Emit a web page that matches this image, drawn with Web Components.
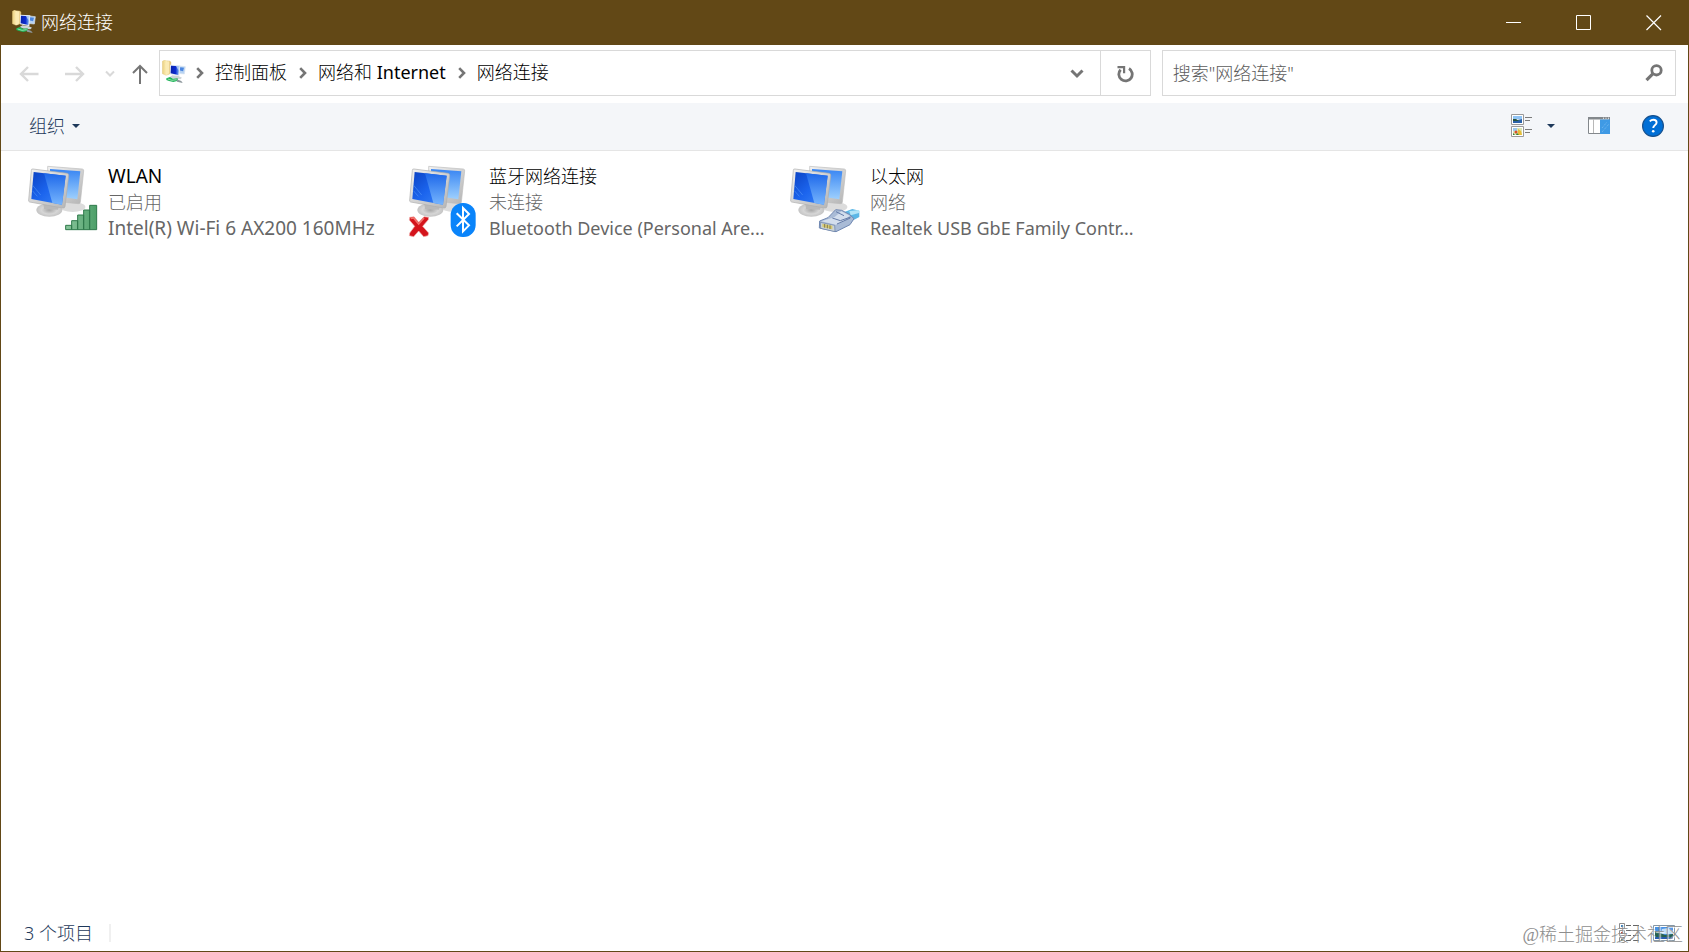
<!DOCTYPE html>
<html lang="zh-CN">
<head>
<meta charset="utf-8">
<title>网络连接</title>
<style>
html, body { height: 100%; margin: 0; }
body { font: 300 18px/24px "Noto Sans", "Noto Sans CJK SC", sans-serif; color: #000; background: #fff; }
.latin { font-weight: 400; }
.wide { font-size: 19px; }
</style>
</head>
<body>
<nc-window>
  <nc-titlebar slot="title">网络连接</nc-titlebar>
  <nc-navbar slot="nav">
    <nc-crumb>控制面板</nc-crumb>
    <nc-crumb>网络和 <span class="latin">Internet</span></nc-crumb>
    <nc-crumb>网络连接</nc-crumb>
  </nc-navbar>
  <nc-toolbar slot="tools">组织</nc-toolbar>
  <nc-connection kind="wlan">
    <span slot="name" class="latin wide">WLAN</span>
    <span slot="state">已启用</span>
    <span slot="device" class="latin wide">Intel(R) Wi-Fi 6 AX200 160MHz</span>
  </nc-connection>
  <nc-connection kind="bluetooth">
    <span slot="name">蓝牙网络连接</span>
    <span slot="state">未连接</span>
    <span slot="device" class="latin">Bluetooth Device (Personal Are...</span>
  </nc-connection>
  <nc-connection kind="ethernet">
    <span slot="name">以太网</span>
    <span slot="state">网络</span>
    <span slot="device" class="latin">Realtek USB GbE Family Contr...</span>
  </nc-connection>
  <nc-status slot="status">3 个项目</nc-status>
</nc-window>
<script>
const resetButton = `
  button { appearance: none; border: 0; margin: 0; padding: 0; background: none; font: inherit; color: inherit;
    display: flex; align-items: center; justify-content: center; }
  svg { display: block; flex: none; }`;

function define(name, html) {
  customElements.define(name, class extends HTMLElement {
    constructor() {
      super();
      const kind = this.getAttribute('kind');
      this.attachShadow({ mode: 'open' }).innerHTML = typeof html === 'function' ? html(kind) : html;
    }
  });
}

/* Folder with a networked computer, used in the title and the address bar */
define('nc-folder-icon', `
<style>:host { display: block; flex: none; } svg { display: block; }</style>
<svg width="24" height="24" viewBox="0 0 72 72" aria-hidden="true">
  <defs>
    <linearGradient id="f" x1="0" x2="1"><stop offset="0" stop-color="#e9cf80"/><stop offset=".5" stop-color="#fff0b8"/><stop offset="1" stop-color="#dfc07a"/></linearGradient>
    <linearGradient id="s" x1="0" x2="1"><stop offset="0" stop-color="#0b22a8"/><stop offset=".55" stop-color="#0a2ad0"/><stop offset="1" stop-color="#7fb6f4"/></linearGradient>
  </defs>
  <path d="M1 4l7-4 4 2 11 1 4 3v34l-9 4-6 2-11-5z" fill="url(#f)" stroke="#dcc076"/>
  <path d="M10 9l11-5v36l-8 5z" fill="#fbebb4"/>
  <path d="M44 17l26 3-3 22-22-2z" fill="#b8d3f2" stroke="#d8e3ef" stroke-width="2"/>
  <path d="M48 21l18 2-3 11-15-4z" fill="#4b86e0"/>
  <path d="M24 14l31 2-3 33-28-6z" fill="#e4ebf3"/>
  <path d="M27 17l25 2-3 26-23-5z" fill="url(#s)"/>
  <path d="M42 18l10 1-2 13z" fill="#cfe2fa" opacity=".7"/>
  <path d="M31 46l18 2 11 5-5 5-20-2-12-5z" fill="#cdd3d7"/>
  <path d="M13 55l11-4 9 5 14-1 1 7-14 4-13-3-8-3z" fill="#21b35b"/>
  <path d="M17 57l13 4 14-2" fill="none" stroke="#8fe0a7" stroke-width="3"/>
  <path d="M44 58l14 5 4 6-17-4z" fill="#8d979c"/>
</svg>`);

define('nc-window', `
<style>
  :host { box-sizing: border-box; display: flex; flex-direction: column; min-height: 100vh;
    border: 1px solid #624816; border-top: 0; position: relative; background: #fff; }
  main { flex: 1; display: flex; flex-wrap: wrap; align-content: flex-start; padding: 9px 23px; }
</style>
<slot name="title"></slot><slot name="nav"></slot><slot name="tools"></slot>
<main><slot></slot></main>
<slot name="status"></slot>`);

define('nc-titlebar', `
<style>
  :host { display: flex; align-items: center; height: 45px; background: #624816; color: #fff; margin: 0 -1px; padding: 0 0 0 12px; }
  nc-folder-icon { margin-bottom: 1px; }
  h1 { font: inherit; flex: 1; margin: 0 0 1px 5px; }
  .controls { display: flex; align-self: stretch; }
  ${resetButton}
  button { width: 70px; }
</style>
<nc-folder-icon></nc-folder-icon>
<h1><slot></slot></h1>
<div class="controls">
  <button aria-label="最小化"><svg width="16" height="16" fill="none" stroke="#fff"><path d="M0 7.500h15"/></svg></button>
  <button aria-label="最大化"><svg width="16" height="16" fill="none" stroke="#fff"><path d="M.5 .5h14v14h-14z"/></svg></button>
  <button aria-label="关闭"><svg width="16" height="16" fill="none" stroke="#fff" stroke-width="1.2"><path d="M.5 .5l14.500 14.500M15 .5l-14.500 14.500"/></svg></button>
</div>`);

define('nc-crumb', `
<style>
  :host { display: flex; align-items: center; }
  svg { display: block; margin: 2px 11px 0 10px; }
  :host(:not(:first-of-type)) svg { margin-left: 12px; }
  a { color: #000; text-decoration: none; white-space: nowrap; }
</style>
<svg width="8" height="12" fill="none" stroke="#757575" stroke-width="2.600" aria-hidden="true"><path d="M1.200 1.200L6 6l-4.800 4.800"/></svg>
<a href="#"><slot></slot></a>`);

define('nc-navbar', `
<style>
  :host { display: flex; align-items: center; height: 48px; padding: 4px 12px 6px 13px; }
  ${resetButton}
  .history { display: flex; align-items: center; width: 145px; flex: none; }
  .history button { height: 46px; }
  .step { width: 30px; margin-right: 16px; }
  .recent { width: 16px; margin: 0 7px 0 -4px; }
  .up { width: 30px; }
  .history svg { margin-top: 1px; }
  .fields { flex: 1; display: grid; grid-template-columns: 27fr 14fr; column-gap: 11px; min-width: 0; }
  .box { box-sizing: border-box; height: 46px; border: 1px solid #d9d9d9; display: flex; align-items: center; min-width: 0; }
  nav { flex: 1; display: flex; align-items: center; padding: 0 0 2px 2px; min-width: 0; overflow: hidden; }
  .drop { width: 46px; height: 44px; }
  .refresh { box-sizing: border-box; width: 50px; height: 44px; border-left: 1px solid #d9d9d9; }
  .drop svg, .refresh svg { margin-top: 2px; }
  input { flex: 1; min-width: 0; border: 0; outline: 0; padding: 0 0 0 10px; margin: 0; background: none; font: inherit; color: #000; }
  input::placeholder { color: #5c5c5c; opacity: 1; }
  .find { width: 42px; height: 44px; }
</style>
<div class="history">
  <button class="step" aria-label="后退"><svg width="20" height="16" fill="none" stroke="#d9d9d9" stroke-width="2.400"><path d="M19.500 8H2M9 1L2 8l7 7"/></svg></button>
  <button class="step" aria-label="前进"><svg width="20" height="16" fill="none" stroke="#d9d9d9" stroke-width="2.400"><path d="M0 8h18M11 1l7 7-7 7"/></svg></button>
  <button class="recent" aria-label="最近浏览的位置"><svg width="10" height="8" fill="none" stroke="#d9d9d9" stroke-width="2"><path d="M1 1.500l4 4 4-4"/></svg></button>
  <button class="up" aria-label="上移"><svg width="16" height="20" fill="none" stroke="#757575" stroke-width="2"><path d="M8 20V2M1 9l7-7 7 7"/></svg></button>
</div>
<div class="fields">
  <div class="box">
    <nav aria-label="地址"><nc-folder-icon></nc-folder-icon><slot></slot></nav>
    <button class="drop" aria-label="历史记录"><svg width="14" height="10" fill="none" stroke="#757575" stroke-width="3"><path d="M1.500 1.500L7 7l5.500-5.500"/></svg></button>
    <button class="refresh" aria-label="刷新"><svg width="18" height="18" viewBox="0 0 18 18" fill="none" stroke="#757575" stroke-width="2.800"><path d="M13 3.500A6.700 6.700 0 1 1 4.600 4.700"/><path d="M1.500 2.200h6.600v6" stroke-width="2.200"/></svg></button>
  </div>
  <div class="box">
    <input type="text" aria-label="搜索" placeholder='搜索"网络连接"'>
    <button class="find" aria-label="开始搜索"><svg width="18" height="18" fill="none" stroke="#757575"><circle cx="11.500" cy="6.300" r="4.700" stroke-width="2.800"/><path d="M8 9.700L1.500 16.200" stroke-width="3.200"/></svg></button>
  </div>
</div>`);

define('nc-toolbar', `
<style>
  :host { box-sizing: border-box; display: flex; align-items: center; height: 48px; background: #f4f6f9; border-bottom: 1px solid #e5e5e5; color: #1e395b; padding: 0 24px 2px 28px; }
  ${resetButton}
  .organize { gap: 7px; margin-right: auto; }
  .views { margin-right: 15px; }
  .more { margin-right: 33px; }
  .pane { margin-right: 32px; }
</style>
<button class="organize"><slot></slot><svg width="8" height="4" fill="#1e395b"><path d="M0 0h8L4 4z"/></svg></button>
<button class="views" aria-label="更改视图"><svg width="21" height="23" viewBox="0 0 21 23">
  <path d="M.5 .5h12v10H.5zM.5 12.500h12v10H.5z" fill="#fff" stroke="#9a9a9a"/>
  <path d="M2 2h9v3H2z" fill="#8fc4f5"/><path d="M2 5l4 1 5-1v4H2z" fill="#2b62a8"/><path d="M2 5l3 0 3 2H2z" fill="#28533c"/>
  <path d="M2 14h9v7H2z" fill="#dbe5b5"/><path d="M2 14h4v3H2z" fill="#9cc8ee"/><circle cx="5" cy="18" r="1.500" fill="#d8502a"/><path d="M7 15l3 2 1 4H7z" fill="#e8bd38"/><path d="M2 19l2 2H2zM6 19l2 2H5z" fill="#347c32"/>
  <path d="M14 3.500h7M14 6.500h5M14 15.500h7M14 18.500h5" stroke="#7c7c7c"/>
</svg></button>
<button class="more" aria-label="更多选项"><svg width="8" height="4" fill="#1e395b"><path d="M0 0h8L4 4z"/></svg></button>
<button class="pane" aria-label="显示预览窗格"><svg width="22" height="17" viewBox="0 0 22 17">
  <path d="M.5 .5h21v16H.5z" fill="#fff" stroke="#83888c"/><path d="M0 0h22v2.500H0z" fill="#83888c"/>
  <path d="M5.500 2v14" stroke="#b8b8b8"/><path d="M12 2.500h10V17H12z" fill="#3f9ae5"/><path d="M14 15l7-8M14 11l5-6" stroke="#76baf0" stroke-dasharray="1 1"/>
  <path d="M15 1.200h1M17.500 1.200h1M20 1.200h1" stroke="#fff"/>
</svg></button>
<button aria-label="帮助"><svg width="22" height="22" viewBox="0 0 22 22">
  <circle cx="11" cy="11" r="10.400" fill="#006fd6" stroke="#14508f" stroke-width="1.200"/>
  <path d="M7.800 6.300C8.700 5.300 10 4.700 11.300 4.700c2 0 3.300 1.100 3.300 2.700 0 2.500-3.400 3-3.400 5.700" fill="none" stroke="#fff" stroke-width="1.900"/><circle cx="11.200" cy="16.200" r="1.300" fill="#fff"/>
</svg></button>`);

/* Overlay drawn on the lower part of the twin-monitor icon, per connection kind */
const badges = {
  wlan: `<g fill="url(#bar)" stroke="#2f7a4b" stroke-width="3">
    <path d="M125 196h18v13h-18zM143 182h18v27h-18zM161 165h18v44h-18zM179 150h18v59h-18zM197 136h21v73h-21z"/></g>`,
  bluetooth: `<path d="M14 172l13-2 14 17 16-17 14 2-1 7-17 20 18 20-2 8-13 3-15-17-15 17-13-3 1-8 15-20-16-19z" fill="#d4141c" stroke="#f3b4b0" stroke-width="2"/>
    <path d="M17 175l9-1 15 18 16-18" fill="none" stroke="#f1706a" stroke-width="5"/>
    <rect x="137" y="129" width="75" height="102" rx="36" fill="#0a84fa"/>
    <path d="M155 160l37 36-18 18v-70l18 18-37 37" fill="none" stroke="#fff" stroke-width="6"/>`,
  ethernet: `<path d="M177 155l22-8 21 5v19l-27 14-17-11z" fill="#5bb7e6"/><path d="M190 153l29-3v9l-25 7z" fill="#b2e4f7"/>
    <path d="M101 183l25-10 23-24 18 2 23 12 14 13-12 18-42 21-50-11z" fill="#a9bbd6" stroke="#7088b2" stroke-width="3"/>
    <path d="M106 184l40-13 20-17 25 13-19 17-23 10z" fill="#d3deed"/>
    <path d="M103 187l43 9 1 19-43-10z" fill="#cbd4d8" stroke="#667da5" stroke-width="2"/>
    <path d="M109 191l30 6v11l-30-7z" fill="#d6ca72"/><path d="M116 192v11M124 194v11M132 196v11" stroke="#827b52" stroke-width="3"/>
    <path d="M139 174l24 8 31-11M150 155l24 12M153 192l40-18" fill="none" stroke="#657ca8" stroke-width="3"/>`
};

define('nc-connection', kind => `
<style>
  :host { display: flex; width: 381px; height: 82px; }
  svg { display: block; flex: none; margin-right: 4px; }
  .text { display: flex; flex-direction: column; padding-top: 3px; min-width: 0; }
  .text div { height: 26px; line-height: 26px; white-space: nowrap; color: #666; }
  .text .name { color: #000; }
</style>
<svg width="80" height="80" viewBox="0 0 240 240" aria-hidden="true">
  <defs>
    <linearGradient id="scr" x1="0" y1="0" x2="1" y2="1"><stop offset="0" stop-color="#0b43c4"/><stop offset=".5" stop-color="#1c65ee"/><stop offset="1" stop-color="#3c86f6"/></linearGradient>
    <linearGradient id="back" x1="0" y1="0" x2="0" y2="1"><stop offset="0" stop-color="#3885f3"/><stop offset="1" stop-color="#9ed0fd"/></linearGradient>
    <linearGradient id="shine" x1="0" y1="0" x2="0" y2="1"><stop offset="0" stop-color="#1e68ea"/><stop offset="1" stop-color="#76b5fd"/></linearGradient>
    <linearGradient id="frame" x1="0" y1="0" x2="1" y2="1"><stop offset="0" stop-color="#f2f2f2"/><stop offset="1" stop-color="#b4b4b4"/></linearGradient>
    <linearGradient id="bar" x1="0" x2="1" y1="0" y2="0"><stop offset="0" stop-color="#8bc69d"/><stop offset="1" stop-color="#4c9f68"/></linearGradient>
    <radialGradient id="base"><stop offset="0" stop-color="#a6a6a6"/><stop offset=".6" stop-color="#d6d6d6"/><stop offset="1" stop-color="#c4c4c4"/></radialGradient>
  </defs>
  <ellipse cx="146" cy="141" rx="38" ry="15" fill="#dcdcdc"/>
  <path d="M71 19l104 8q5 1 4 6l-10 94q-1 5-6 4l-92-9z" fill="url(#frame)" stroke="#bdbdbd" stroke-width="2"/>
  <path d="M78 27l91 7-9 84-81-12z" fill="url(#back)"/>
  <ellipse cx="76" cy="150" rx="39" ry="20" fill="url(#base)"/>
  <path d="M57 124l50 6-5 19-42-2z" fill="#b9b9b9"/>
  <path d="M27 27l102 13q6 1 5 7l-11 93q-1 5-7 4L17 126q-4-1-3-6l8-89q0-5 5-4z" fill="url(#frame)" stroke="#adadad" stroke-width="2"/>
  <path d="M29 36l96 11-11 87-92-17z" fill="url(#scr)"/>
  <path d="M60 40l65 7-11 87-29-5z" fill="url(#shine)"/>
  <path d="M26 76l24 29M25 92l15 17" stroke="#4d91f5" stroke-width="2"/>
  ${badges[kind]}
</svg>
<div class="text">
  <div class="name"><slot name="name"></slot></div>
  <div><slot name="state"></slot></div>
  <div><slot name="device"></slot></div>
</div>`);

define('nc-status', `
<style>
  :host { display: flex; align-items: center; height: 34px; padding: 0 13px 2px 23px; box-sizing: border-box; color: #1e395b; position: relative; }
  .count { padding-right: 16px; border-right: 2px solid #f0f0f0; line-height: 18px; margin-right: auto; }
  ${resetButton}
  .list { margin-right: 13px; }
  .mark { position: absolute; right: 5px; bottom: 4px; font: 18px/24px "Liberation Serif", "Noto Sans CJK SC", serif; font-weight: 300; color: #8e8e8e; pointer-events: none; white-space: nowrap; text-shadow: 1px 1px 1px #fff; }
</style>
<span class="count"><slot></slot></span>
<button class="list" aria-label="详细信息"><svg width="21" height="20" viewBox="0 0 21 20">
  <path d="M.5 .5h5v5h-5zM.5 7.500h5v5h-5zM.5 14.500h5v5h-5z" fill="#fff" stroke="#8d8d8d"/>
  <path d="M2 2h2v2H2z" fill="#3c84d4"/><path d="M2 9h2v2H2z" fill="#c7472c"/><path d="M2 16h2v2H2z" fill="#3f6f4a"/>
  <path d="M7 2.500h5M14 2.500h6M7 7.500h5M14 7.500h6M7 12.500h5M14 12.500h6M7 17.500h5M14 17.500h6" stroke="#666"/>
</svg></button>
<button aria-label="大图标"><svg width="22" height="16" viewBox="0 0 22 16">
  <path d="M.5 .5h21v15H.5z" fill="#fff" stroke="#8496a5"/><path d="M2 2h18v12H2z" fill="#4a92e5"/><path d="M9 4l6-1 5 3v3H8z" fill="#c2def8"/><path d="M2 6l5 2 5 2 8-1v3H2z" fill="#27604d"/><path d="M2 12h18v2H2z" fill="#285bb0"/>
</svg></button>
<span class="mark">@稀土掘金技术社区</span>`);
</script>
</body>
</html>
